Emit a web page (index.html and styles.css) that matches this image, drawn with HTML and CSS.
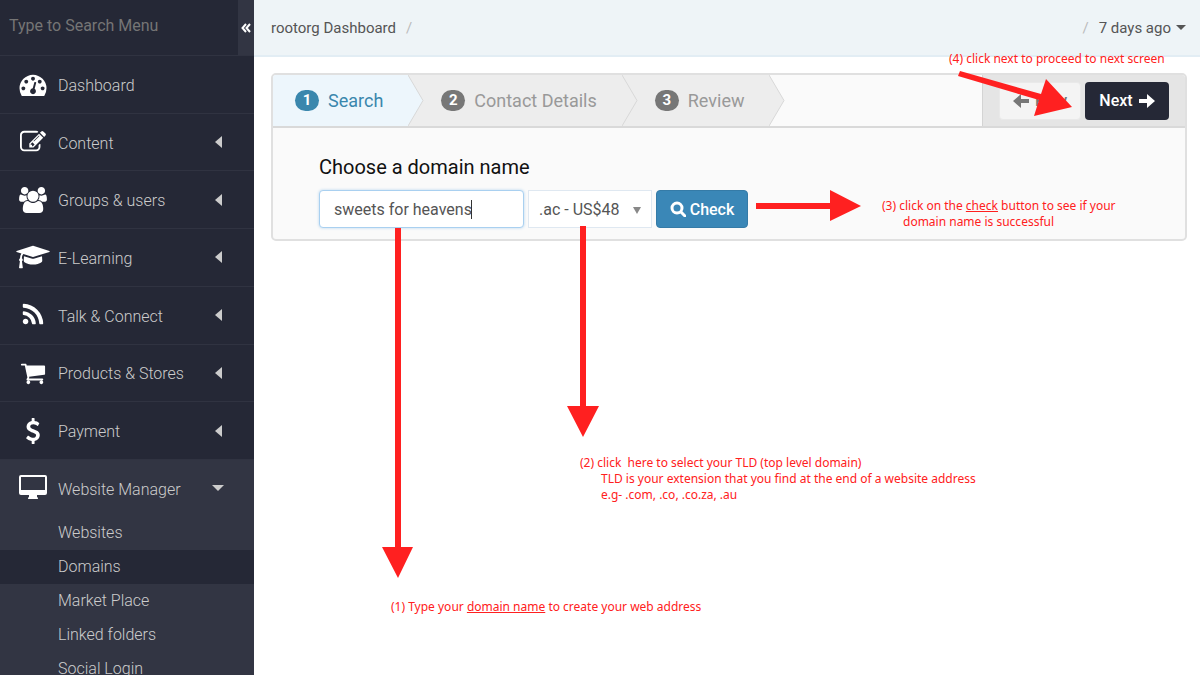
FILE: index.html
```html
<!DOCTYPE html>
<html lang="en">

<head>
    <meta charset="UTF-8">
    <meta name="viewport" content="width=device-width, initial-scale=1.0">
    <title>rootorg Dashboard - Domains</title>
    <link rel="stylesheet" href="styles.css">
</head>

<body>
    <aside class="sidebar">
        <div class="menu-search">
            <input type="text" class="menu-search-input" placeholder="Type to Search Menu" aria-label="Search menu">
            <button type="button" class="collapse" aria-label="Collapse menu">
                <svg viewBox="0 0 10 10" width="10" height="10"><path d="M5 1L1.500 5L5 9M9 1L5.500 5L9 9" /></svg>
            </button>
        </div>

        <nav class="menu">
            <div class="menu-main">
                <a href="#" class="menu-item">
                    <svg class="icon" viewBox="0 0 1792 1792" width="27" height="27"><path d="M384 1152q0-53-37.500-90.500t-90.500-37.500-90.500 37.500-37.500 90.500 37.500 90.500 90.500 37.500 90.500-37.500 37.500-90.500zm192-448q0-53-37.500-90.500t-90.500-37.500-90.500 37.500-37.500 90.500 37.500 90.500 90.500 37.500 90.500-37.500 37.500-90.500zm428 481l101-382q6-26-7.500-48.500t-38.500-29.500-48 6.500-30 39.500l-101 382q-60 5-107 43.500t-63 98.500q-20 77 20 146t117 89 146-20 89-117q16-60-6-117t-72-91zm660-33q0-53-37.500-90.500t-90.500-37.500-90.500 37.500-37.500 90.500 37.500 90.500 90.500 37.500 90.500-37.500 37.500-90.500zm-640-640q0-53-37.500-90.500t-90.500-37.500-90.500 37.500-37.500 90.500 37.500 90.500 90.500 37.500 90.500-37.500 37.500-90.500zm448 192q0-53-37.500-90.500t-90.500-37.500-90.500 37.500-37.500 90.500 37.500 90.500 90.500 37.500 90.500-37.500 37.500-90.500zm320 448q0 261-141 483-19 29-54 29h-1402q-35 0-54-29-141-221-141-483 0-182 71-348t191-286 286-191 348-71 348 71 286 191 191 286 71 348z" /></svg>
                    <span>Dashboard</span>
                </a>
                <a href="#" class="menu-item">
                    <svg class="icon" viewBox="0 0 1792 1792" width="26" height="26"><path d="M888 1184l116-116-152-152-116 116v56h96v96h56zm440-720q-16-16-33 1l-350 350q-17 17-1 33t33-1l350-350q17-17 1-33zm80 594v190q0 119-84.500 203.500t-203.500 84.500h-832q-119 0-203.500-84.500t-84.500-203.500v-832q0-119 84.500-203.500t203.500-84.500h832q63 0 117 25 15 7 18 23 3 17-9 29l-49 49q-14 14-32 8-23-6-45-6h-832q-66 0-113 47t-47 113v832q0 66 47 113t113 47h832q66 0 113-47t47-113v-126q0-13 9-22l64-64q15-15 35-7t20 29zm-96-738l288 288-672 672h-288v-288zm444 132l-92 92-288-288 92-92q28-28 68-28t68 28l152 152q28 28 28 68t-28 68z" /></svg>
                    <span>Content</span>
                    <i class="caret-left"></i>
                </a>
                <a href="#" class="menu-item">
                    <svg class="icon" viewBox="0 0 1920 1792" width="28" height="26"><path d="M593 896q-162 5-265 128h-134q-82 0-138-40.500t-56-118.500q0-353 124-353 6 0 43.500 21t97.500 42.500 119 21.500q67 0 133-23-5 37-5 66 0 139 81 256zm1071 637q0 120-73 189.500t-194 69.500h-874q-121 0-194-69.500t-73-189.500q0-53 3.500-103.500t14-109 26.500-108.500 43-97.500 62-81 85.500-53.500 111.500-20q10 0 43 21.500t73 48 107 48 135 21.500 135-21.500 107-48 73-48 43-21.500q61 0 111.500 20t85.500 53.500 62 81 43 97.500 26.500 108.500 14 109 3.500 103.500zm-1024-1277q0 106-75 181t-181 75-181-75-75-181 75-181 181-75 181 75 75 181zm704 384q0 159-112.500 271.500t-271.500 112.500-271.500-112.500-112.500-271.500 112.500-271.500 271.500-112.500 271.500 112.500 112.500 271.500zm576 225q0 78-56 118.500t-138 40.500h-134q-103-123-265-128 81-117 81-256 0-29-5-66 66 23 133 23 59 0 119-21.500t97.500-42.500 43.500-21q124 0 124 353zm-128-609q0 106-75 181t-181 75-181-75-75-181 75-181 181-75 181 75 75 181z" /></svg>
                    <span>Groups &amp; users</span>
                    <i class="caret-left"></i>
                </a>
                <a href="#" class="menu-item">
                    <svg class="icon" viewBox="0 0 2304 1792" width="33" height="26"><path d="M1774 836l18 316q4 69-82 128t-235 93.500-323 34.500-323-34.500-235-93.500-82-128l18-316 574 181q22 7 48 7t48-7zm530-324q0 23-22 31l-1120 352q-4 1-10 1t-10-1l-652-206q-43 34-71 111.500t-34 178.500q63 36 63 109 0 69-58 107l58 433q2 14-8 25-9 11-24 11h-192q-15 0-24-11-10-11-8-25l58-433q-58-38-58-107 0-73 65-111 11-207 98-330l-333-104q-22-8-22-31t22-31l1120-352q4-1 10-1t10 1l1120 352q22 8 22 31z" /></svg>
                    <span>E-Learning</span>
                    <i class="caret-left"></i>
                </a>
                <a href="#" class="menu-item">
                    <svg class="icon" viewBox="0 0 1792 1792" width="26" height="26"><path d="M576 1344q0 80-56 136t-136 56-136-56-56-136 56-136 136-56 136 56 56 136zm512 123q2 28-17 48-18 21-47 21h-135q-25 0-43-16.500t-20-41.500q-22-229-184.500-391.500t-391.500-184.500q-25-2-41.500-20t-16.500-43v-135q0-29 21-47 17-17 43-17h5q160 13 306 80.500t259 181.500q114 113 181.500 259t80.500 306zm512 2q2 27-18 47-18 20-46 20h-143q-26 0-44.500-17.500t-19.500-42.500q-12-215-101-408.500t-231.500-336-336-231.500-408.500-102q-25-1-42.500-19.500t-17.500-43.500v-143q0-28 20-46 18-18 44-18h3q262 13 501.500 120t425.500 294q187 186 294 425.500t120 501.500z" /></svg>
                    <span>Talk &amp; Connect</span>
                    <i class="caret-left"></i>
                </a>
                <a href="#" class="menu-item">
                    <svg class="icon" viewBox="0 0 1792 1792" width="26" height="26"><path d="M704 1536q0 52-38 90t-90 38-90-38-38-90 38-90 90-38 90 38 38 90zm896 0q0 52-38 90t-90 38-90-38-38-90 38-90 90-38 90 38 38 90zm128-1088v512q0 24-16.500 42.500t-40.500 21.500l-1044 122q13 60 13 70 0 16-24 64h920q26 0 45 19t19 45-19 45-45 19h-1024q-26 0-45-19t-19-45q0-11 8-31.500t16-36 21.500-40 15.500-29.500l-177-823h-204q-26 0-45-19t-19-45 19-45 45-19h256q16 0 28.500 6.500t19.500 15.500 13 24.500 8 26 5.500 29.500 4.500 26h1201q26 0 45 19t19 45z" /></svg>
                    <span>Products &amp; Stores</span>
                    <i class="caret-left"></i>
                </a>
                <a href="#" class="menu-item">
                    <svg class="icon" viewBox="0 0 1792 1792" width="26" height="26"><path d="M1362 1185q0 153-99.500 263.500t-258.500 136.500v175q0 14-9 23t-23 9h-135q-13 0-22.500-9.500t-9.500-22.500v-175q-66-9-127.500-31t-101.500-44.500-74-48-46.500-37.500-17.500-18q-17-21-2-41l103-135q7-10 23-12 15-2 24 9l2 2q113 99 243 125 37 8 74 8 81 0 142.500-43t61.500-122q0-28-15-53t-33.500-42-58.500-37.500-66-32-80-32.500q-39-16-61.500-25t-61.500-26.500-62.500-31-56.500-35.500-53.500-42.500-43.500-49-35.500-58-21-66.500-8.500-78q0-138 98-242t255-134v-180q0-13 9.500-22.500t22.500-9.500h135q14 0 23 9t9 23v176q57 6 110.500 23t87 33.500 63.500 37.500 39 29 15 14q17 18 5 38l-81 146q-8 15-23 16-14 3-27-7-3-3-14.500-12t-39-26.500-58.500-32-74.500-26-85.500-11.500q-95 0-155 43t-60 111q0 26 8.500 48t29.500 41.500 39.500 33 56 31 60.500 27 70 27.500q53 20 81 31.500t76 35 75.500 42.500 62 50 53 63.500 31.500 76.500 13 94z" /></svg>
                    <span>Payment</span>
                    <i class="caret-left"></i>
                </a>
            </div>

            <div class="menu-open">
                <a href="#" class="menu-item">
                    <svg class="icon" viewBox="0 0 28 26" width="28" height="26"><path fill-rule="evenodd" d="M2 0H26Q28 0 28 2V18Q28 20 26 20H18V22Q19 22 19 24H9Q9 22 10 22V20H2Q0 20 0 18V2Q0 0 2 0ZM2 2V15H26V2Z" /></svg>
                    <span>Website Manager</span>
                    <i class="caret-down"></i>
                </a>
                <ul class="submenu">
                    <li><a href="#">Websites</a></li>
                    <li><a href="#" class="active">Domains</a></li>
                    <li><a href="#">Market Place</a></li>
                    <li><a href="#">Linked folders</a></li>
                    <li><a href="#">Social Login</a></li>
                </ul>
            </div>
        </nav>
    </aside>

    <main class="main">
        <header class="topbar">
            <div class="crumbs"><a href="#">rootorg Dashboard</a><span class="slash">/</span></div>
            <div class="crumbs"><span class="slash">/</span><button type="button" class="period">7 days ago <i class="caret-small"></i></button></div>
        </header>

        <section class="wizard">
            <div class="wizard-head">
                <ol class="steps">
                    <li class="step current">
                        <span class="badge">1</span>Search
                        <svg class="chevron" viewBox="0 0 16 52" preserveAspectRatio="none"><path d="M0 0L15 26L0 52" /></svg>
                    </li>
                    <li class="step">
                        <span class="badge">2</span>Contact Details
                        <svg class="chevron" viewBox="0 0 16 52" preserveAspectRatio="none"><path d="M0 0L15 26L0 52" /></svg>
                    </li>
                    <li class="step">
                        <span class="badge">3</span>Review
                        <svg class="chevron" viewBox="0 0 16 52" preserveAspectRatio="none"><path d="M0 0L15 26L0 52" /></svg>
                    </li>
                </ol>
                <div class="actions">
                    <button type="button" class="btn btn-prev" disabled>
                        <svg viewBox="0 0 16 14" width="16" height="14"><path d="M0 7L8 0V5H16V9H8V14Z" /></svg>
                        Prev
                    </button>
                    <button type="button" class="btn btn-next">
                        Next
                        <svg viewBox="0 0 16 14" width="16" height="14"><path d="M16 7L8 0V5H0V9H8V14Z" /></svg>
                    </button>
                </div>
            </div>

            <form class="wizard-body">
                <label class="form-title" for="domain">Choose a domain name</label>
                <div class="form-row">
                    <div class="domain">
                        <input type="text" id="domain" name="domain" value="sweets for heavens">
                        <span class="cursor"></span>
                    </div>
                    <div class="tld">
                        <select name="tld" aria-label="Top level domain">
                            <option>.ac - US$48</option>
                        </select>
                        <i class="caret-select"></i>
                    </div>
                    <button type="button" class="btn btn-check">
                        <svg class="search-icon" viewBox="0 0 16 16" width="16" height="16"><circle cx="7" cy="7" r="5" /><path d="M11 11L15 15" /></svg>
                        Check
                    </button>
                </div>
            </form>
        </section>
    </main>

    <!-- tutorial notes, drawn over the page -->
    <svg class="arrows" viewBox="0 0 1200 675" width="1200" height="675">
        <path d="M395 228H401V547H413L398 578L382 547H395Z" />
        <path d="M580 226H586V406H599L583 437L567 406H580Z" />
        <path d="M756 203H830V190L861 206L830 221V209H756Z" />
        <path d="M960 71L1041 94L1046 79L1072 107L1034 116L1039 100L958 76Z" />
    </svg>
    <p class="note note-type">(1) Type your <u>domain name</u> to create your web address</p>
    <p class="note note-select">(2) click&nbsp; here to select your TLD (top level domain)<br>
        <span class="indent">TLD is your extension that you find at the end of a website address</span><br>
        <span class="indent">e.g- .com, .co, .co.za, .au</span></p>
    <p class="note note-check">(3) click on the <u>check</u> button to see if your<br>
        <span class="indent">domain name is successful</span></p>
    <p class="note note-next">(4) click next to proceed to next screen</p>
</body>

</html>
```
FILE: styles.css
```css
* {
    box-sizing: border-box;
}

body {
    font-family: Roboto, "Liberation Sans", sans-serif;
    font-size: 16px;
    color: #555;
    background-color: #fff;
    margin: 0;
    display: flex;
    height: 100vh;
    overflow: hidden;
    position: relative;
}

a {
    color: inherit;
    text-decoration: none;
}

input,
select,
button {
    font-family: inherit;
    font-size: inherit;
    color: inherit;
    margin: 0;
}

button {
    cursor: pointer;
}

/* sidebar */
.sidebar {
    flex: none;
    width: 254px;
    background-color: #252836;
    color: #ccc;
    overflow: hidden;
}

.menu-search {
    display: flex;
    height: 56px;
    border-bottom: 1px solid #303341;
}

.menu-search-input {
    flex: 1;
    min-width: 0;
    padding: 0 9px 4px;
    border: none;
    outline: none;
    background: none;
}

.menu-search-input::placeholder {
    color: #757575;
}

.collapse {
    width: 16px;
    padding: 0;
    border: none;
    background-color: #323543;
}

.collapse svg {
    display: block;
    margin: 0 auto;
    fill: none;
    stroke: #fff;
    stroke-width: 2;
}

.menu-main {
    display: grid;
    grid-auto-rows: 1fr;
    min-height: 404px;
}

.menu-item {
    display: flex;
    align-items: center;
    padding-right: 32px;
    font-weight: 300;
    border-bottom: 1px solid #303341;
}

.menu-item span {
    flex: 1;
    padding-top: 2px;
}

.icon {
    flex: none;
    width: 34px;
    margin: 0 8px 0 16px;
    fill: #fff;
}

.menu-open {
    background-color: #323543;
}

.menu-open .menu-item {
    height: 56px;
    padding-right: 30px;
    border-bottom: none;
}

.caret-left {
    border: 6px solid transparent;
    border-left: none;
    border-right: 7px solid #ccc;
}

.caret-down {
    border: 6px solid transparent;
    border-bottom: none;
    border-top-color: #ccc;
}

.submenu {
    list-style: none;
    margin: 0;
    padding: 0;
}

.submenu a {
    display: block;
    padding-left: 58px;
    line-height: 34px;
    font-weight: 300;
}

.submenu .active {
    background-color: #252836;
}

/* top bar */
.main {
    flex: 1;
    min-width: 0;
}

.topbar {
    display: flex;
    justify-content: space-between;
    align-items: center;
    height: 57px;
    padding: 0 14px 0 17px;
    background-color: #eef4f7;
    border-bottom: 2px solid #e2edf4;
    font-size: 15px;
}

.crumbs {
    display: flex;
    align-items: center;
    gap: 10px;
}

.slash {
    color: #bbb;
}

.period {
    display: flex;
    align-items: center;
    gap: 5px;
    padding: 0;
    border: none;
    background: none;
}

.caret-small {
    border: 5px solid transparent;
    border-bottom: none;
    border-top-color: #555;
}

/* wizard */
.wizard {
    margin: 16px 13px 0 17px;
    border: 2px solid #e0e0e0;
    border-radius: 5px;
    background-color: #fafafa;
    overflow: hidden;
}

.wizard-head {
    display: flex;
    justify-content: space-between;
    height: 53px;
    border-bottom: 2px solid #d9d9d9;
}

.steps {
    display: flex;
    list-style: none;
    margin: 0;
    padding: 0;
}

.step {
    position: relative;
    display: flex;
    align-items: center;
    gap: 9px;
    padding: 0 25px 0 33px;
    background-color: #ededed;
    color: #999;
    font-size: 18px;
}

.step.current {
    padding-left: 22px;
    background-color: #edf6fc;
    color: #3a87ad;
}

.badge {
    width: 24px;
    border-radius: 11px;
    background-color: #777;
    color: #fff;
    font-size: 15px;
    font-weight: 700;
    line-height: 21px;
    text-align: center;
}

.current .badge {
    background-color: #3a87ad;
}

.chevron {
    position: absolute;
    top: 0;
    left: 100%;
    z-index: 1;
    width: 16px;
    height: 100%;
    fill: #ededed;
    stroke: #d8d8d8;
}

.current .chevron {
    fill: #edf6fc;
}

.actions {
    display: flex;
    align-items: center;
    gap: 4px;
    padding: 0 16px;
    background-color: #e5e5e5;
    border-left: 1px solid #d4d4d4;
}

.btn {
    display: flex;
    align-items: center;
    justify-content: center;
    height: 38px;
    border: 1px solid transparent;
    border-radius: 4px;
    font-weight: 500;
}

.btn svg {
    fill: currentColor;
}

.btn .search-icon {
    fill: none;
    stroke: currentColor;
    stroke-width: 3;
    stroke-linecap: round;
}

.btn-prev {
    gap: 6px;
    width: 82px;
    background-color: #f4f4f4;
    border-color: #e9e9e9;
    color: #777;
}

.btn-next {
    gap: 6px;
    width: 84px;
    background-color: #252836;
    color: #fff;
}

.wizard-body {
    padding: 25px 46px 11px;
}

.form-title {
    display: block;
    margin-bottom: 9px;
    color: #111;
    font-size: 20px;
    line-height: 28px;
}

.form-row {
    display: flex;
    gap: 4px;
}

.domain,
.tld {
    position: relative;
}

.domain input {
    display: block;
    width: 205px;
    height: 38px;
    padding: 0 14px;
    border: 1px solid #a9d0f0;
    border-radius: 4px;
    outline: none;
    background-color: #fff;
    box-shadow: 0 0 3px #b5d5ee;
}

.cursor {
    position: absolute;
    top: 10px;
    left: 152px;
    width: 1px;
    height: 19px;
    background-color: #333;
}

.tld select {
    display: block;
    width: 124px;
    height: 38px;
    padding: 0 10px;
    appearance: none;
    border: 1px solid #dfe8f1;
    border-radius: 0;
    background-color: #fff;
}

.caret-select {
    position: absolute;
    top: 17px;
    right: 11px;
    border: 4px solid transparent;
    border-top: 7px solid #888;
    border-bottom: none;
}

.btn-check {
    gap: 4px;
    width: 92px;
    background-color: #3a87b7;
    border-color: #357ba7;
    color: #fff;
}

/* notes */
.arrows {
    position: absolute;
    top: 0;
    left: 0;
    z-index: 2;
    fill: #ff2020;
    pointer-events: none;
}

.note {
    position: absolute;
    z-index: 2;
    margin: 0;
    color: #ff2020;
    font-family: "Noto Sans", "Open Sans", sans-serif;
    font-size: 12px;
    line-height: 16px;
    white-space: nowrap;
}

.indent {
    padding-left: 21px;
}

.note-type {
    left: 391px;
    top: 599px;
}

.note-select {
    left: 580px;
    top: 455px;
}

.note-check {
    left: 882px;
    top: 198px;
}

.note-next {
    left: 949px;
    top: 51px;
}
```
